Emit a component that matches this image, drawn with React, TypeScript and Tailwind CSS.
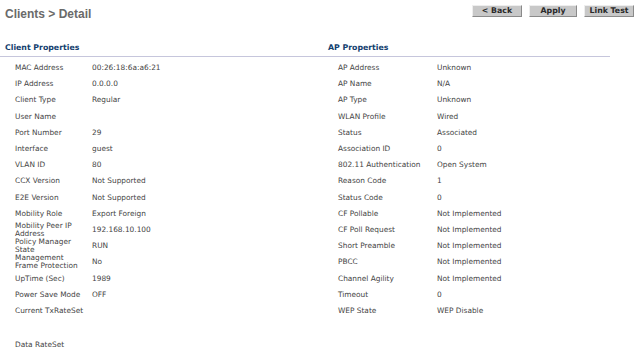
import React from 'react';

type Row = {
  label: React.ReactNode;
  value?: string;
  tall?: boolean;
};

const clientRows: Row[] = [
  { label: 'MAC Address', value: '00:26:18:6a:a6:21' },
  { label: 'IP Address', value: '0.0.0.0' },
  { label: 'Client Type', value: 'Regular' },
  { label: 'User Name' },
  { label: 'Port Number', value: '29' },
  { label: 'Interface', value: 'guest' },
  { label: 'VLAN ID', value: '80' },
  { label: 'CCX Version', value: 'Not Supported' },
  { label: 'E2E Version', value: 'Not Supported' },
  { label: 'Mobility Role', value: 'Export Foreign' },
  { label: <>Mobility Peer IP<br />Address</>, value: '192.168.10.100' },
  { label: <>Policy Manager<br />State</>, value: 'RUN' },
  { label: <>Management<br />Frame Protection</>, value: 'No' },
  { label: 'UpTime (Sec)', value: '1989' },
  { label: 'Power Save Mode', value: 'OFF' },
  { label: 'Current TxRateSet', tall: true },
  { label: 'Data RateSet' }
];

const apRows: Row[] = [
  { label: 'AP Address', value: 'Unknown' },
  { label: 'AP Name', value: 'N/A' },
  { label: 'AP Type', value: 'Unknown' },
  { label: 'WLAN Profile', value: 'Wired' },
  { label: 'Status', value: 'Associated' },
  { label: 'Association ID', value: '0' },
  { label: '802.11 Authentication', value: 'Open System' },
  { label: 'Reason Code', value: '1' },
  { label: 'Status Code', value: '0' },
  { label: 'CF Pollable', value: 'Not Implemented' },
  { label: 'CF Poll Request', value: 'Not Implemented' },
  { label: 'Short Preamble', value: 'Not Implemented' },
  { label: 'PBCC', value: 'Not Implemented' },
  { label: 'Channel Agility', value: 'Not Implemented' },
  { label: 'Timeout', value: '0' },
  { label: 'WEP State', value: 'WEP Disable' }
];

function PropRows({ rows, labelWidth }: { rows: Row[]; labelWidth: string }) {
  return <div className="flex flex-col">
      {rows.map((r, i) => <div key={i} className={`flex ${r.tall ? 'h-[34px] items-start pt-[4px]' : 'h-[16.2px] items-center'}`}>
          <div className={`${labelWidth} shrink-0 leading-[8px]`}>{r.label}</div>
          <div className="leading-[8px]">{r.value}</div>
        </div>)}
    </div>;
}

function Btn({ children, w }: { children: React.ReactNode; w: string }) {
  return <button className={`${w} h-[12px] bg-[#c8c8c8] border border-t-[#eeeeee] border-l-[#eeeeee] border-b-[#8a8a8a] border-r-[#8a8a8a] text-[7.8px] font-bold text-[#2a2a2a] leading-none flex items-center justify-center`}>
      {children}
    </button>;
}

export default function App() {
  return <div className="w-[640px] h-[353px] bg-white overflow-hidden text-[7.4px] text-[#444444]" style={{ fontFamily: '"DejaVu Sans", Verdana, sans-serif' }}>
      {/* Title bar */}
      <div className="flex items-start justify-between h-[40px]">
        <div className="pl-[5px] pt-[5px] text-[12px] font-bold text-[#6a6a6a]" style={{ fontFamily: '"Liberation Sans", Arial, sans-serif' }}>
          Clients &gt; Detail
        </div>
        <div className="flex gap-[7px] pt-[5px] pr-[6px]">
          <Btn w="w-[50px]">&lt; Back</Btn>
          <Btn w="w-[48px]">Apply</Btn>
          <Btn w="w-[50px]">Link Test</Btn>
        </div>
      </div>

      {/* Section headers */}
      <div className="flex w-[610px] h-[17px] border-b border-[#c6c6dc] items-center text-[7.8px] font-bold text-[#123e6e]">
        <div className="w-[328px] pl-[5px]">Client Properties</div>
        <div>AP Properties</div>
      </div>

      {/* Properties */}
      <div className="flex pt-[3px]">
        <div className="w-[328px] pl-[15px]">
          <PropRows rows={clientRows} labelWidth="w-[77px]" />
        </div>
        <div className="pl-[10px]">
          <PropRows rows={apRows} labelWidth="w-[99px]" />
        </div>
      </div>
    </div>;
}
